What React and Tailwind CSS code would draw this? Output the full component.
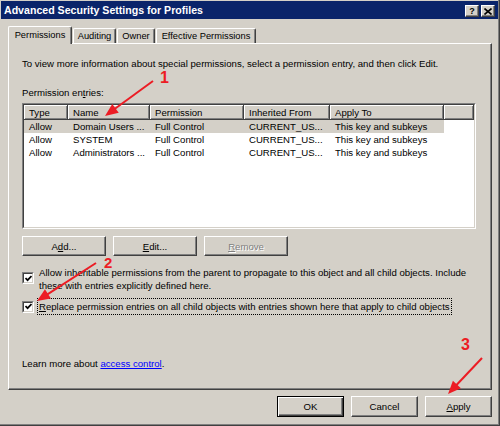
import React from 'react';

// classic 3D bevels
const raised =
  'border border-t-white border-l-white border-r-[#404040] border-b-[#404040] shadow-[inset_-1px_-1px_#808080]';
const sunkenOuter =
  'border border-t-[#808080] border-l-[#808080] border-r-white border-b-white';
const sunkenInner =
  'border border-t-[#404040] border-l-[#404040] border-r-[#d4d0c8] border-b-[#d4d0c8]';
const tab =
  'ml-[1px] h-[15px] border-t border-l border-r border-t-white border-l-white border-r-[#404040] shadow-[inset_-1px_0_#808080] rounded-t-[2px] flex justify-center pt-[1px]';

const cols = [44, 82, 94, 86, 114];
const headers = ['Type', 'Name', 'Permission', 'Inherited From', 'Apply To'];
const entries = [
  ['Allow', 'Domain Users ...', 'Full Control', 'CURRENT_US...', 'This key and subkeys'],
  ['Allow', 'SYSTEM', 'Full Control', 'CURRENT_US...', 'This key and subkeys'],
  ['Allow', 'Administrators ...', 'Full Control', 'CURRENT_US...', 'This key and subkeys'],
];

function Button({ children, width, disabled, isDefault }) {
  if (isDefault) {
    return (
      <div
        style={{ width }}
        className="h-[21px] border border-black flex items-center justify-center shadow-[inset_1px_1px_#fff,inset_-1px_-1px_#404040,inset_-2px_-2px_#808080]"
      >
        {children}
      </div>
    );
  }
  return (
    <div
      style={{ width }}
      className={`h-full flex items-center justify-center ${raised} ${
        disabled ? 'text-[#808080] [text-shadow:1px_1px_#fff]' : ''
      }`}
    >
      {children}
    </div>
  );
}

function Check() {
  return (
    <div className={`w-[12px] h-[12px] shrink-0 ${sunkenOuter}`}>
      <div className={`w-full h-full bg-white flex items-center justify-center ${sunkenInner}`}>
        <svg width="7" height="7" viewBox="0 0 7 7">
          <path d="M0.5 3 L2.6 5.2 L6.5 1" stroke="black" strokeWidth="1.7" fill="none" />
        </svg>
      </div>
    </div>
  );
}

function Arrow({ x1, y1, x2, y2 }) {
  const dx = x2 - x1;
  const dy = y2 - y1;
  const len = Math.hypot(dx, dy);
  const ux = dx / len;
  const uy = dy / len;
  const bx = x2 - ux * 13;
  const by = y2 - uy * 13;
  const pts = [
    [x2, y2],
    [bx - uy * 5.5, by + ux * 5.5],
    [bx + uy * 5.5, by - ux * 5.5],
  ]
    .map(p => p.join(','))
    .join(' ');
  return (
    <g>
      <line x1={x1} y1={y1} x2={bx + ux * 2} y2={by + uy * 2} stroke="#ec1c24" strokeWidth="2" />
      <polygon points={pts} fill="#ec1c24" />
    </g>
  );
}

export default function App() {
  return (
    <div className="relative w-[500px] h-[426px] overflow-hidden bg-[#d4d0c8] pl-[1px] pt-[1px] border-r border-b border-r-[#404040] border-b-[#404040] shadow-[inset_-1px_-1px_#808080] font-['Liberation_Sans',Arial,sans-serif] text-[9.6px] leading-[13px] text-black">
      {/* title bar */}
      <div className="w-[497px] h-[18px] bg-[#0a246a] flex items-center justify-between pl-[3px] pr-[3px]">
        <span className="text-white font-bold text-[10.6px]">Advanced Security Settings for Profiles</span>
        <div className="flex gap-[2px] mt-[2px]">
          <div className={`w-[14px] h-[12px] flex items-center justify-center bg-[#d4d0c8] font-bold text-[9px] leading-none ${raised}`}>
            ?
          </div>
          <div className={`w-[14px] h-[12px] flex items-center justify-center bg-[#d4d0c8] ${raised}`}>
            <svg width="8" height="7" viewBox="0 0 8 7">
              <path d="M0.5 0.5 L7.5 6.5 M7.5 0.5 L0.5 6.5" stroke="black" strokeWidth="1.6" />
            </svg>
          </div>
        </div>
      </div>

      {/* tabs */}
      <div className="mt-[7px] ml-[7px] h-[17px] flex items-end text-[9.3px]">
        <div className="relative z-10 mb-[-1px] w-[64px] h-[18px] bg-[#d4d0c8] border-t border-l border-r border-t-white border-l-white border-r-[#404040] shadow-[inset_-1px_0_#808080] rounded-t-[2px] flex justify-center pt-[2px]">
          Permissions
        </div>
        <div className={`w-[43px] ${tab}`}>Auditing</div>
        <div className={`w-[38px] ${tab}`}>Owner</div>
        <div className={`w-[100px] ${tab}`}>Effective Permissions</div>
      </div>

      {/* tab panel */}
      <div className={`ml-[7px] w-[484px] h-[347px] pl-[13px] ${raised}`}>
        <p className="mt-[13px] whitespace-nowrap">
          To view more information about special permissions, select a permission entry, and then click Edit.
        </p>
        <p className="mt-[16px]">
          Permission en<span className="underline">t</span>ries:
        </p>

        {/* list */}
        <div className={`mt-[4px] w-[454px] h-[126px] ${sunkenOuter}`}>
          <div className={`w-full h-full bg-white ${sunkenInner}`}>
            <div className="flex h-[15px]">
              {headers.map((h, i) => (
                <div
                  key={h}
                  style={{ width: cols[i] }}
                  className="bg-[#d4d0c8] pl-[5px] flex items-center whitespace-nowrap border-r border-b border-[#404040] shadow-[inset_1px_1px_#fff,inset_-1px_-1px_#808080]"
                >
                  {h}
                </div>
              ))}
              <div className="flex-1 bg-[#d4d0c8] border-r border-b border-[#404040] shadow-[inset_1px_1px_#fff,inset_-1px_-1px_#808080]" />
            </div>
            {entries.map((row, r) => (
              <div key={r} className={`flex h-[13px] w-[420px] ${r === 0 ? 'bg-[#d4d0c8]' : ''}`}>
                {row.map((c, i) => (
                  <div key={i} style={{ width: cols[i] }} className="pl-[5px] whitespace-nowrap">
                    {c}
                  </div>
                ))}
              </div>
            ))}
          </div>
        </div>

        {/* list buttons */}
        <div className="mt-[7px] h-[20px] flex gap-[7px]">
          <Button width={84}>
            A<span className="underline">d</span>d...
          </Button>
          <Button width={84}>
            <span className="underline">E</span>dit...
          </Button>
          <Button width={84} disabled>
            <span className="underline">R</span>emove
          </Button>
        </div>

        {/* inheritance checkboxes */}
        <div className="mt-[10px] flex">
          <div className="mt-[6px]">
            <Check />
          </div>
          <p className="ml-[5px] whitespace-nowrap">
            Allow inheritable permissions from the parent to propagate to this object and all child objects. Include
            <br />
            these with entries explicitly defined here.
          </p>
        </div>
        <div className="mt-[6px] flex items-center">
          <Check />
          <p className="ml-[3px] px-[1px] py-[1px] border border-dotted border-black whitespace-nowrap">
            <span className="underline">R</span>eplace permission entries on all child objects with entries shown here that apply to child objects
          </p>
        </div>

        <p className="mt-[42px]">
          Learn more about <span className="text-[#0000ff] underline">access control</span>.
        </p>
      </div>

      {/* dialog buttons */}
      <div className="mt-[6px] h-[21px] flex justify-end gap-[7px] pr-[7px]">
        <Button width={67} isDefault>
          OK
        </Button>
        <Button width={67}>Cancel</Button>
        <Button width={67}>
          <span className="underline">A</span>pply
        </Button>
      </div>

      {/* annotations */}
      <svg className="absolute inset-0 pointer-events-none" width="500" height="426">
        <Arrow x1={153} y1={81} x2={105} y2={116} />
        <Arrow x1={96} y1={263} x2={37} y2={301} />
        <Arrow x1={482} y1={358} x2={448} y2={394} />
      </svg>
      <span className="absolute left-[160px] top-[70px] text-[16px] leading-[16px] font-bold text-[#ec1c24]">1</span>
      <span className="absolute left-[104px] top-[255px] text-[15px] leading-[16px] font-bold text-[#ec1c24]">2</span>
      <span className="absolute left-[461px] top-[337px] text-[16px] leading-[16px] font-bold text-[#ec1c24]">3</span>
    </div>
  );
}
